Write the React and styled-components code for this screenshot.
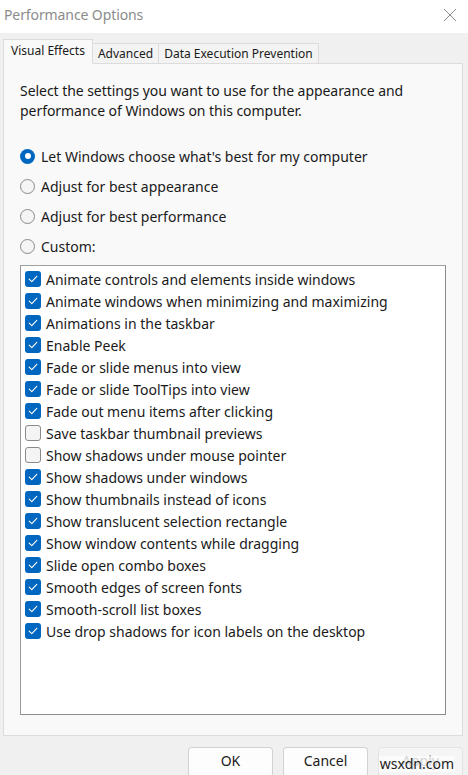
import React from "react";
import styled, { createGlobalStyle } from "styled-components";

const GlobalStyle = createGlobalStyle`
  html, body { margin: 0; padding: 0; background: #f0f0f0; }
  body { font-family: "Noto Sans", "Open Sans", sans-serif; color: #1a1a1a; }
  * { box-sizing: border-box; }
`;

const Window = styled.div`
  width: 468px;
  height: 775px;
  display: flex;
  flex-direction: column;
  background: #f0f0f0;
  overflow: hidden;
  position: relative;
`;

const TitleBar = styled.div`
  height: 33px;
  flex: none;
  background: #ffffff;
  display: flex;
  align-items: center;
  justify-content: space-between;
  padding: 0 10px 4px 4px;
`;

const Title = styled.span`
  font-size: 14px;
  color: #8b8b8b;
  letter-spacing: -0.1px;
`;

const CloseButton = styled.div`
  width: 16px;
  height: 16px;
  display: flex;
  align-items: center;
  justify-content: center;
`;

const Body = styled.div`
  flex: 1;
  display: flex;
  flex-direction: column;
  padding: 7px 5px 0 3px;
`;

const TabStrip = styled.div`
  display: flex;
  align-items: flex-end;
  height: 24px;
  position: relative;
  z-index: 1;
  margin-bottom: -1px;
`;

const Tab = styled.div`
  height: ${(p) => (p.$active ? "25px" : "21px")};
  padding-left: ${(p) => (p.$active ? "7px" : "5px")};
  padding-right: ${(p) => (p.$active ? "7px" : "5px")};
  padding-bottom: ${(p) => (p.$active ? "2px" : "0")};
  display: flex;
  align-items: center;
  font-size: 12px;
  color: #1a1a1a;
  background: ${(p) => (p.$active ? "#f9f9f9" : "#f3f3f3")};
  border: 1px solid #dcdcdc;
  border-bottom: ${(p) => (p.$active ? "1px solid #f9f9f9" : "1px solid #dcdcdc")};
  ${(p) => (p.$active ? "" : "border-left: none;")}
`;

const Panel = styled.div`
  height: 673px;
  background: #f9f9f9;
  border: 1px solid #dcdcdc;
  padding: 17px 16px 20px 16px;
  display: flex;
  flex-direction: column;
`;

const Description = styled.p`
  margin: 0 0 20px 0;
  font-size: 14px;
  line-height: 20px;
  letter-spacing: -0.05px;
`;

const RadioRow = styled.label`
  height: 30px;
  display: flex;
  align-items: center;
  gap: 6px;
  font-size: 14px;
`;

const RadioCircle = styled.span`
  width: 15px;
  height: 15px;
  border-radius: 50%;
  flex: none;
  box-sizing: border-box;
  background: ${(p) => (p.$checked ? "#0067c0" : "#f5f5f5")};
  border: ${(p) => (p.$checked ? "none" : "1px solid #8a8a8a")};
  display: flex;
  align-items: center;
  justify-content: center;
  &::after {
    content: "";
    display: ${(p) => (p.$checked ? "block" : "none")};
    width: 6px;
    height: 6px;
    border-radius: 50%;
    background: #ffffff;
  }
`;

const ListBox = styled.div`
  margin-top: 4px;
  flex: 1;
  background: #ffffff;
  border: 1px solid #8c8c8c;
  border-top-color: #a0a0a0;
  border-left-color: #9a9a9a;
  padding: 2px 4px;
`;

const CheckRow = styled.div`
  height: 22px;
  display: flex;
  align-items: center;
  gap: 5px;
  font-size: 14px;
  white-space: nowrap;
`;

const CheckBoxMark = styled.span`
  width: 16px;
  height: 16px;
  flex: none;
  border-radius: 3px;
  background: ${(p) => (p.$checked ? "#0067c0" : "#f4f4f4")};
  border: ${(p) => (p.$checked ? "none" : "1px solid #8a8a8a")};
  display: flex;
  align-items: center;
  justify-content: center;
`;

const Footer = styled.div`
  display: flex;
  justify-content: flex-end;
  gap: 10px;
  padding-top: 11px;
`;

const Button = styled.div`
  width: 85px;
  height: 30px;
  border-radius: 4px;
  border: 1px solid;
  display: flex;
  align-items: center;
  justify-content: center;
  font-size: 14px;
  color: ${(p) => (p.$disabled ? "#a0a0a0" : "#1a1a1a")};
  background: ${(p) => (p.$disabled ? "#f5f5f5" : "#fdfdfd")};
  border-color: ${(p) => (p.$disabled ? "#e3e3e3" : "#d2d2d2 #d2d2d2 #bdbdbd")};
  padding-bottom: 3px;
`;

const Watermark = styled.span`
  position: absolute;
  right: 13px;
  bottom: 3px;
  font-size: 14px;
  color: #222;
  background: rgba(255, 255, 255, 0.55);
  padding: 0 1px;
  line-height: 16px;
`;

const options = [
  ["Animate controls and elements inside windows", true],
  ["Animate windows when minimizing and maximizing", true],
  ["Animations in the taskbar", true],
  ["Enable Peek", true],
  ["Fade or slide menus into view", true],
  ["Fade or slide ToolTips into view", true],
  ["Fade out menu items after clicking", true],
  ["Save taskbar thumbnail previews", false],
  ["Show shadows under mouse pointer", false],
  ["Show shadows under windows", true],
  ["Show thumbnails instead of icons", true],
  ["Show translucent selection rectangle", true],
  ["Show window contents while dragging", true],
  ["Slide open combo boxes", true],
  ["Smooth edges of screen fonts", true],
  ["Smooth-scroll list boxes", true],
  ["Use drop shadows for icon labels on the desktop", true],
];

const radios = [
  ["Let Windows choose what's best for my computer", true],
  ["Adjust for best appearance", false],
  ["Adjust for best performance", false],
  ["Custom:", false],
];

const Check = () => (
  <svg width="10" height="8" viewBox="0 0 10 8" fill="none">
    <path d="M1.2 4.2 L3.8 6.6 L8.8 1.4" stroke="#ffffff" strokeWidth="1.1" strokeLinecap="round" strokeLinejoin="round" />
  </svg>
);

export default function App() {
  return (
    <Window>
      <GlobalStyle />
      <TitleBar>
        <Title>Performance Options</Title>
        <CloseButton>
          <svg width="14" height="14" viewBox="0 0 14 14">
            <path d="M1 1 L13 13 M13 1 L1 13" stroke="#8a8a8a" strokeWidth="1" />
          </svg>
        </CloseButton>
      </TitleBar>
      <Body>
        <TabStrip>
          <Tab $active>Visual Effects</Tab>
          <Tab>Advanced</Tab>
          <Tab>Data Execution Prevention</Tab>
        </TabStrip>
        <Panel>
          <Description>
            Select the settings you want to use for the appearance and
            <br />
            performance of Windows on this computer.
          </Description>
          {radios.map(([label, checked]) => (
            <RadioRow key={label}>
              <RadioCircle $checked={checked} />
              {label}
            </RadioRow>
          ))}
          <ListBox>
            {options.map(([label, checked]) => (
              <CheckRow key={label}>
                <CheckBoxMark $checked={checked}>{checked && <Check />}</CheckBoxMark>
                {label}
              </CheckRow>
            ))}
          </ListBox>
        </Panel>
        <Footer>
          <Button>OK</Button>
          <Button>Cancel</Button>
          <Button $disabled>Apply</Button>
        </Footer>
      </Body>
      <Watermark>wsxdn.com</Watermark>
    </Window>
  );
}
